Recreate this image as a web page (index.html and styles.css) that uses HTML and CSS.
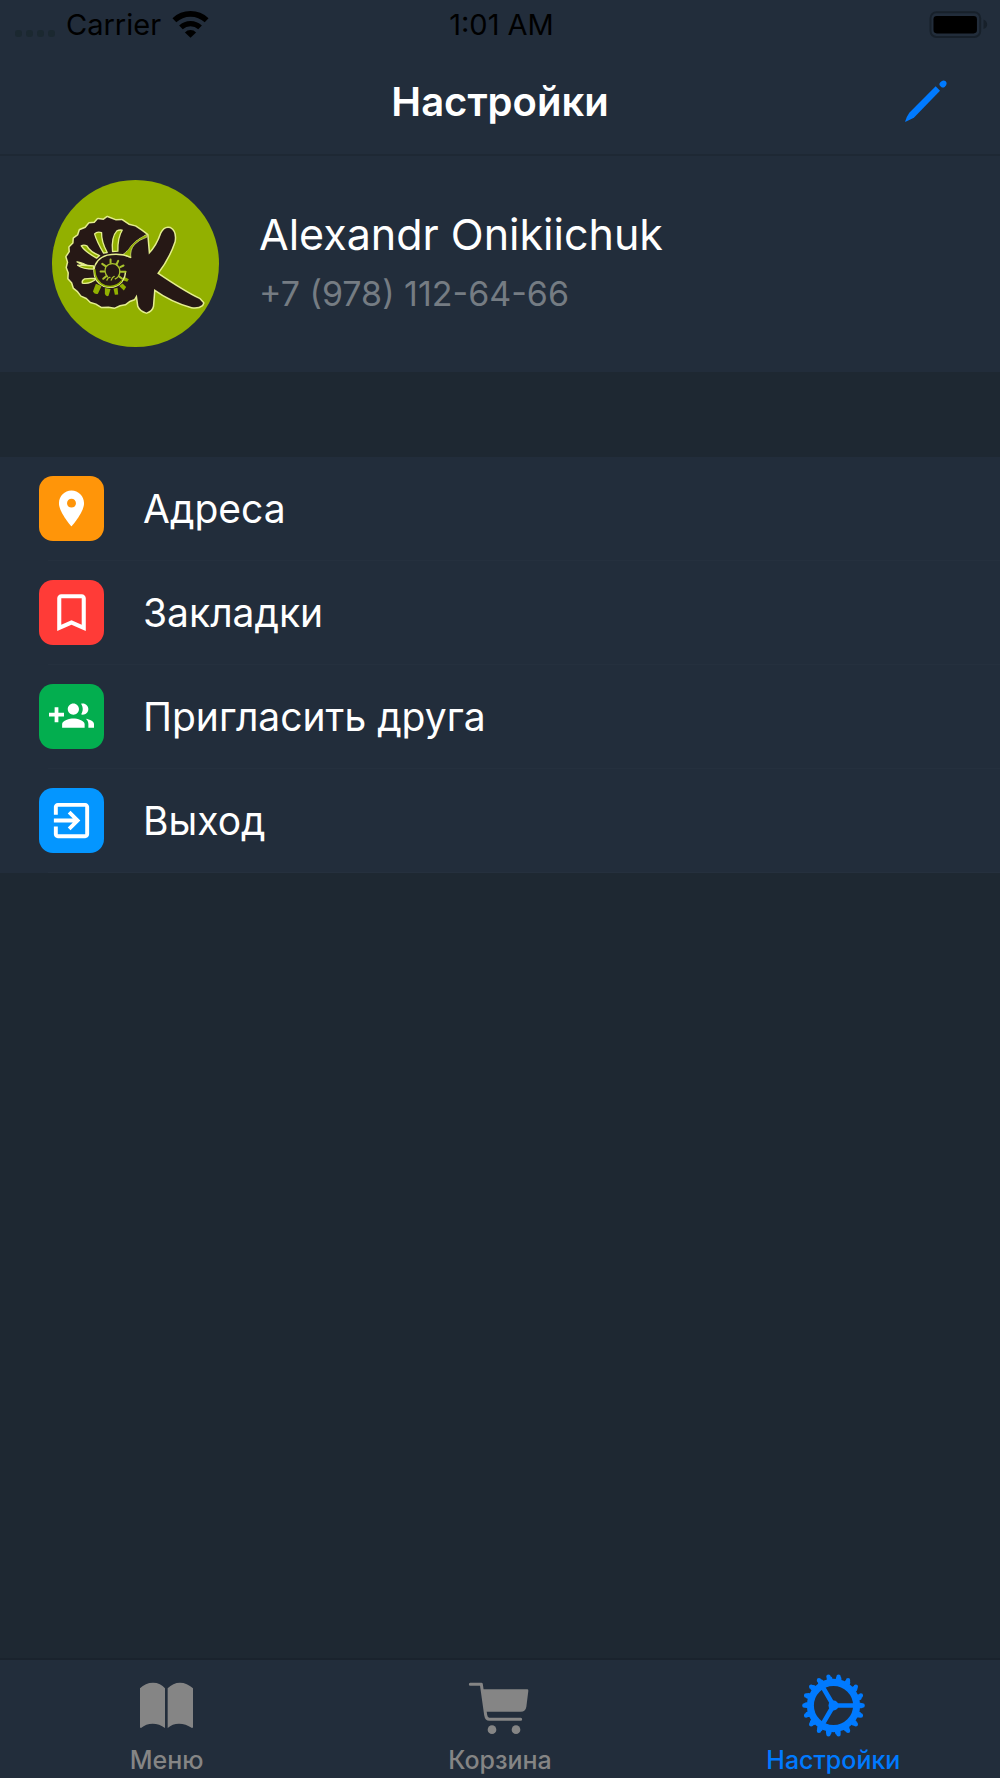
FILE: index.html
```
<!DOCTYPE html>
<html lang="ru">
<head>
    <meta charset="UTF-8">
    <meta name="viewport" content="width=device-width, initial-scale=1.0">
    <title>Настройки</title>
    <link rel="stylesheet" href="styles.css">
</head>
<body>

<div class="app">
    <!-- Status bar -->
    <div class="status-bar">
        <div class="carrier">
            <span class="signal"><i></i><i></i><i></i><i></i></span>
            <span>Carrier</span>
            <svg class="wifi" viewBox="0 0 110 82" aria-hidden="true">
                <path d="M6 28A72 72 0 0 1 104 28" fill="none" stroke="#000" stroke-width="17"/>
                <path d="M26 50A42 42 0 0 1 84 50" fill="none" stroke="#000" stroke-width="16"/>
                <path d="M55 81L38 65A24 24 0 0 1 72 65Z"/>
            </svg>
        </div>
        <div class="time">1:01 AM</div>
        <svg class="battery" viewBox="0 0 178 82" aria-hidden="true">
            <rect x="4" y="4" width="151" height="75" rx="18" fill="none" stroke="#17202a" stroke-width="6"/>
            <rect x="13" y="15" width="132" height="53" rx="10"/>
            <path d="M165 26Q176 31 176 41T165 55Z" fill="#17202a"/>
        </svg>
    </div>

    <header class="nav-bar">
        <h1>Настройки</h1>
        <button type="button" class="edit-button" aria-label="Редактировать">
            <svg viewBox="0 0 126 126" aria-hidden="true">
                <path d="M92 19L105 32L28 112Q21 117 0 126Q4 110 13 98Z"/>
                <path d="M106 7Q114 -2 122 4Q129 12 119 21Q113 25 108 20L105 17Q101 12 106 7Z"/>
            </svg>
        </button>
    </header>

    <main>
        <section class="profile">
            <svg class="avatar" viewBox="35 44 502 502" role="img" aria-label="Alexandr Onikiichuk">
                <circle cx="286" cy="295" r="251" fill="#92b000"/>
                <g fill="#261815" stroke="#e4ee8e" stroke-width="9" stroke-linejoin="round" paint-order="stroke">
                    <path d="M321 209L303 196L285 184L266 179L245 165L227 166L201 156L190 164L173 162L163 173L147 175L136 188L119 195L114 210L101 220L100 234L88 246L89 260L79 275L84 291L80 307L86 323L85 340L96 352L101 368L113 378L123 391L139 398L151 410L168 415L184 425L205 424L223 427L239 420L255 417L268 407L282 402L290 388L295 423Q301 437 319 442Q335 437 338 423L342 372Q395 410 455 426Q475 429 486 420L489 414L478 402Q435 382 351 325Q386 280 403 229Q408 199 390 189Q374 184 364 204Q351 243 326 268Z"/>
                </g>
                <!-- Shell mouth -->
                <path d="M321 207Q282 224 262 255Q257 263 248 268L272 278Q269 254 283 238Q297 223 320 216Z" fill="#92b000" stroke="#e4ee8e" stroke-width="2"/>
                <path d="M262 255Q282 224 312 211L290 200L250 200L240 260Z" fill="#261815"/>
                <!-- Outer chambers -->
                <g fill="#92b000" stroke="#e4ee8e" stroke-width="4" stroke-linejoin="round">
                    <path d="M217 259Q213 215 230 197Q238 193 246 195Q232 217 233 258Z"/>
                    <path d="M190 264Q170 230 163 206Q170 198 184 202Q183 230 201 262Z"/>
                    <path d="M169 279Q134 259 123 242Q130 238 140 242Q149 260 178 271Z"/>
                    <path d="M160 302Q126 303 110 290Q117 290 129 295Q140 302 160 302V312Q128 312 112 300Z"/>
                    <path d="M161 340Q148 339 133 341Q124 345 126 354Q150 358 168 341Z"/>
                </g>
                <g fill="#92b000">
                    <path d="M167 356L184 363L173 386Q164 389 158 379Z"/>
                    <path d="M194 369L211 372L205 392Q198 396 194 387Z"/>
                    <path d="M220 371L232 368L234 388L224 389Z"/>
                    <path d="M237 363L247 355L258 366L251 376Z"/>
                    <path d="M248 345L255 336L266 342L261 350Z"/>
                </g>
                <!-- Inner spiral -->
                <path d="M273 277Q240 262 201 270Q164 281 161 317Q161 351 191 364Q226 373 246 349Q256 335 256 318" fill="none" stroke="#e4ee8e" stroke-width="4"/>
                <path d="M163 312Q164 349 194 362Q226 370 245 347" fill="none" stroke="#92b000" stroke-width="5"/>
                <g fill="none" stroke="#a9c22d" stroke-linecap="round">
                    <path d="M202 335Q190 322 197 305Q208 291 226 297Q242 307 238 326Q235 337 225 341" stroke-width="4"/>
                    <path d="M211 293V283M229 298L234 287M240 306L250 301M241 320H256M196 303L186 296M192 319H181M198 333L189 341M237 334L246 341" stroke-width="6"/>
                    <path d="M200 345Q204 336 209 337M213 345Q216 336 222 334" stroke-width="4"/>
                </g>
            </svg>
            <div class="profile-info">
                <h2>Alexandr Onikiichuk</h2>
                <p>+7 (978) 112-64-66</p>
            </div>
        </section>

        <ul class="settings-list">
            <li>
                <a href="#addresses">
                    <span class="tile orange">
                        <svg width="43" height="43" viewBox="0 0 24 24" aria-hidden="true"><path d="M12 2C8.13 2 5 5.13 5 9c0 5.25 7 13 7 13s7-7.75 7-13c0-3.87-3.13-7-7-7zm0 9.5c-1.38 0-2.5-1.12-2.5-2.5s1.12-2.5 2.5-2.5 2.5 1.12 2.5 2.5-1.12 2.5-2.5 2.5z"/></svg>
                    </span>
                    <span class="label">Адреса</span>
                </a>
            </li>
            <li>
                <a href="#bookmarks">
                    <span class="tile red">
                        <svg width="49" height="49" viewBox="0 0 24 24" aria-hidden="true"><path d="M17 3H7c-1.1 0-1.99.9-1.99 2L5 21l7-3 7 3V5c0-1.1-.9-2-2-2zm0 15l-5-2.18L7 18V5h10v13z"/></svg>
                    </span>
                    <span class="label">Закладки</span>
                </a>
            </li>
            <li>
                <a href="#invite">
                    <span class="tile green">
                        <svg width="45" height="45" viewBox="0 0 24 24" aria-hidden="true"><path d="M8 10H5V7H3v3H0v2h3v3h2v-3h3v-2zm10 1c1.66 0 2.99-1.34 2.99-3S19.66 5 18 5c-.32 0-.63.05-.91.14.57.81.9 1.79.9 2.86s-.34 2.04-.9 2.86c.28.09.59.14.91.14zm-5 0c1.66 0 2.99-1.34 2.99-3S14.66 5 13 5c-1.66 0-3 1.34-3 3s1.34 3 3 3zm6.62 2.16c.83.73 1.38 1.66 1.38 2.84v2h3v-2c0-1.54-2.37-2.49-4.38-2.84zM13 13c-2 0-6 1-6 3v2h12v-2c0-2-4-3-6-3z"/></svg>
                    </span>
                    <span class="label">Пригласить друга</span>
                </a>
            </li>
            <li>
                <a href="#logout">
                    <span class="tile blue">
                        <svg width="47" height="47" viewBox="0 0 24 24" aria-hidden="true"><path d="M10.09 15.59L11.5 17l5-5-5-5-1.41 1.41L12.67 11H3v2h9.67l-2.58 2.59zM19 3H5c-1.11 0-2 .9-2 2v4h2V5h14v14H5v-4H3v4c0 1.1.89 2 2 2h14c1.1 0 2-.9 2-2V5c0-1.1-.9-2-2-2z"/></svg>
                    </span>
                    <span class="label">Выход</span>
                </a>
            </li>
        </ul>
    </main>

    <nav class="tab-bar">
        <a href="#menu">
            <svg viewBox="0 0 189 189" aria-hidden="true">
                <path d="M15 43Q31 26 54 26T90 43V162Q73 149 53 149T18 162Q15 162 15 159Z"/>
                <path d="M98 43Q114 26 135 26T174 43V159Q174 162 171 162Q152 149 132 149T98 162Z"/>
            </svg>
            <span>Меню</span>
        </a>
        <a href="#cart">
            <svg viewBox="0 0 189 189" aria-hidden="true">
                <path d="M7 31H40L53 123Q55 136 64 136H158" fill="none" stroke="currentColor" stroke-width="9" stroke-linecap="round" stroke-linejoin="round"/>
                <path d="M43 46H178Q181 46 181 50L175 98Q173 113 158 113H52Z"/>
                <circle cx="72" cy="167" r="13"/>
                <circle cx="144" cy="167" r="13"/>
            </svg>
            <span>Корзина</span>
        </a>
        <a href="#settings" class="active">
            <svg viewBox="-94 -94 188 188" aria-hidden="true">
                <g fill="none" stroke="currentColor">
                    <circle r="69" stroke-width="21"/>
                    <circle r="80" stroke-width="17" stroke-linecap="round" pathLength="18" stroke-dasharray="0 1"/>
                    <circle r="87" stroke-width="13" stroke-linecap="round" pathLength="18" stroke-dasharray="0 1"/>
                    <path d="M0 0H64M0 0L-32 -55M0 0L-32 55" stroke-width="14"/>
                </g>
                <circle r="15"/>
            </svg>
            <span>Настройки</span>
        </a>
    </nav>
</div>

</body>
</html>
```
FILE: styles.css
```
* {
    box-sizing: border-box;
}

body {
    margin: 0;
    background-color: #1e2832;
    color: #fff;
    font-family: Inter, "Liberation Sans", sans-serif;
}

h1, h2, p, ul {
    margin: 0;
    padding: 0;
}

svg {
    display: block;
    fill: currentColor;
}

a {
    color: inherit;
    text-decoration: none;
}

.app {
    min-height: 100vh;
    display: flex;
    flex-direction: column;
}

main {
    flex: 1;
}

/* Status bar */
.status-bar {
    display: grid;
    grid-template-columns: 1fr auto 1fr;
    align-items: center;
    height: 48px;
    padding: 0 12px 0 15px;
    background-color: #222d3b;
    color: #000;
    font-size: 29px;
}

.carrier {
    display: flex;
    align-items: center;
    gap: 11px;
}

.signal {
    display: flex;
    gap: 4px;
    padding-top: 18px;
}

.signal i {
    width: 7px;
    height: 7px;
    border-radius: 3px;
    background-color: #1b2830;
}

.wifi {
    width: 37px;
    height: 27px;
}

.battery {
    width: 59px;
    height: 27px;
    justify-self: end;
}

/* Navigation bar */
.nav-bar {
    display: grid;
    grid-template-columns: 1fr auto 1fr;
    align-items: center;
    height: 108px;
    padding: 0 53px;
    background-color: #222d3b;
    border-bottom: 2px solid #1e2834;
}

.nav-bar h1 {
    grid-column: 2;
    font-size: 40px;
    font-weight: 600;
}

.edit-button {
    justify-self: end;
    padding: 0;
    border: none;
    background: none;
    color: #007aff;
    cursor: pointer;
}

.edit-button svg {
    width: 42px;
    height: 42px;
}

/* Profile */
.profile {
    display: flex;
    align-items: center;
    gap: 40px;
    padding: 24px 52px 25px;
    background-color: #222d3b;
}

.avatar {
    width: 167px;
    height: 167px;
    flex-shrink: 0;
}

.profile-info {
    line-height: 59px;
}

.profile-info h2 {
    font-size: 43px;
    font-weight: 400;
}

.profile-info p {
    color: #757c83;
    font-size: 34px;
}

/* Settings list */
.settings-list {
    margin-top: 85px;
    background-color: #222d3b;
    list-style: none;
}

.settings-list a {
    display: flex;
    align-items: center;
    gap: 39px;
    height: 104px;
    padding: 0 39px 1px;
    font-size: 39px;
}

.settings-list li {
    background: linear-gradient(#25303e, #25303e) 48px 100% / 100% 1px no-repeat;
}

.tile {
    display: flex;
    align-items: center;
    justify-content: center;
    width: 65px;
    height: 65px;
    border-radius: 14px;
}

.orange {
    background-color: #ff9509;
}

.red {
    background-color: #ff3b37;
}

.green {
    background-color: #03ae4f;
}

.blue {
    background-color: #0496ff;
}

/* Tab bar */
.tab-bar {
    display: grid;
    grid-template-columns: repeat(3, 1fr);
    background-color: #222d3b;
    border-top: 2px solid #1a232d;
}

.tab-bar a {
    display: flex;
    flex-direction: column;
    align-items: center;
    gap: 8px;
    padding: 14px 0 3px;
    color: #858585;
    font-size: 25px;
    font-weight: 500;
    line-height: 30px;
}

.tab-bar svg {
    width: 63px;
    height: 63px;
}

.tab-bar .active {
    color: #007aff;
}
```
